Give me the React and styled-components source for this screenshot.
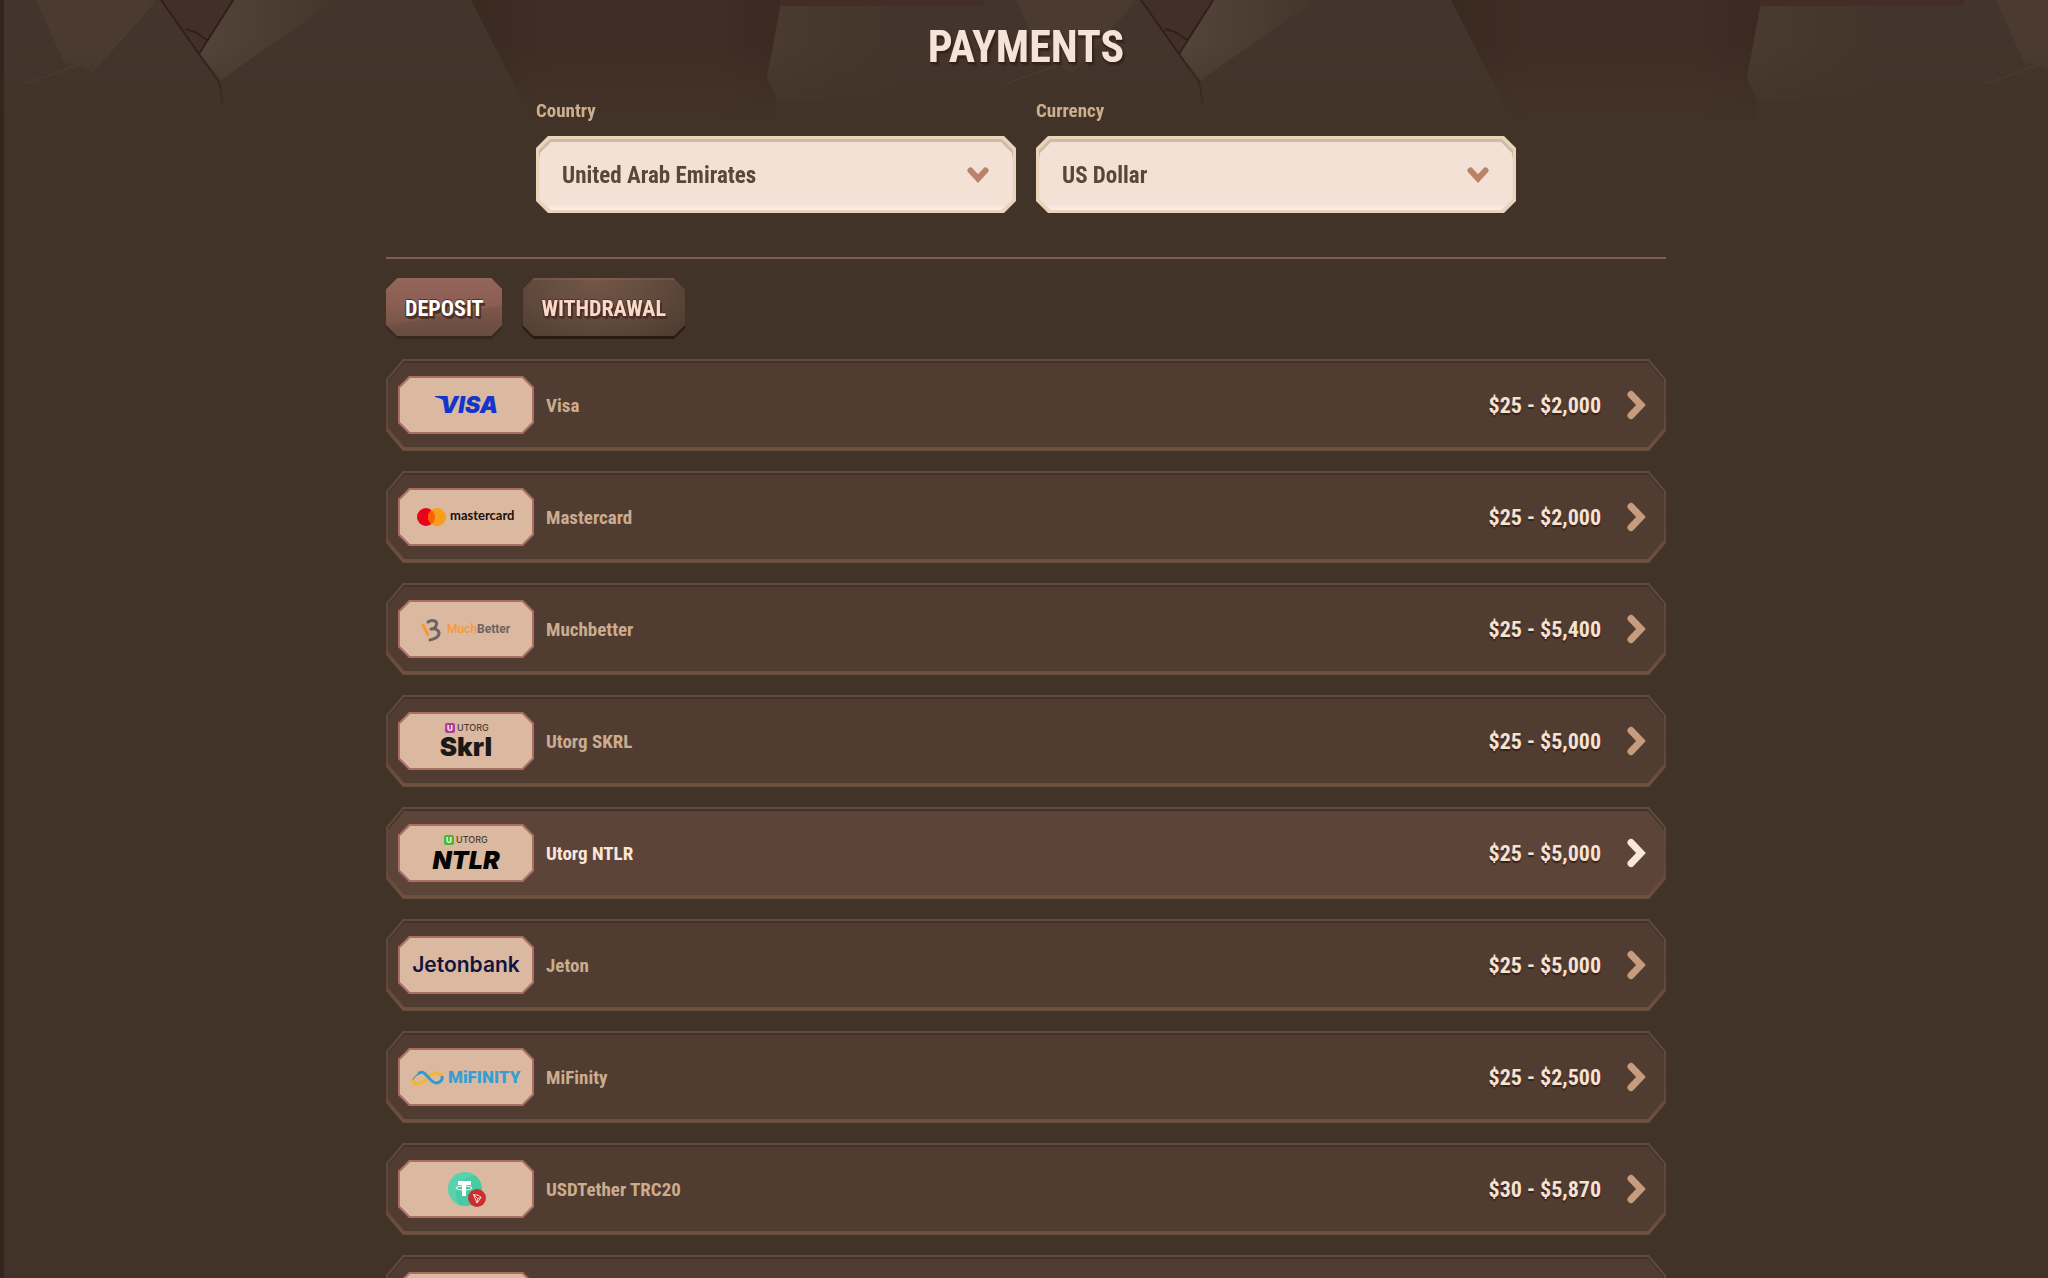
import React, { useState } from 'react';
import styled, { createGlobalStyle, css } from 'styled-components';

const GlobalStyle = createGlobalStyle`
  * {
    box-sizing: border-box;
  }

  body {
    margin: 0;
    background: #423328;
  }

  body, button, select {
    font-family: 'Roboto Condensed', Lato, sans-serif;
  }
`;

// cuts all four corners of a box
const chamfer = (x, y = x) => css`
  clip-path: polygon(
    ${x}px 0, calc(100% - ${x}px) 0, 100% ${y}px, 100% calc(100% - ${y}px),
    calc(100% - ${x}px) 100%, ${x}px 100%, 0 calc(100% - ${y}px), 0 ${y}px
  );
`;

const Page = styled.div`
  position: relative;
  height: 100vh;
  overflow: hidden auto;
  scrollbar-width: none;
  border-left: 4px solid #33261e;
`;

const Stones = styled.svg`
  position: absolute;
  top: 0;
  left: 0;
  z-index: -1;
  width: 100%;
  height: 150px;
`;

const Content = styled.main`
  width: 100%;
  max-width: 1280px;
  margin: 0 auto;
`;

const Title = styled.h1`
  margin: 0;
  padding: 22px 0 24px;
  font-size: 44px;
  line-height: 50px;
  text-align: center;
  color: #f6e3d8;
  text-shadow: 0 2px 0 #35221b, 2px 3px 2px #35221b;
`;

const Filters = styled.div`
  display: grid;
  grid-template-columns: 1fr 1fr;
  gap: 20px;
  padding: 0 150px 44px;
  border-bottom: 2px solid #85594f;
`;

const Field = styled.div`
  display: flex;
  flex-direction: column;
  gap: 10px;
`;

const Label = styled.label`
  font-size: 19px;
  line-height: 30px;
  font-weight: bold;
  color: #cfae8f;
`;

const SelectFrame = styled.div`
  padding: 3px;
  background: #ead5bb;
  ${chamfer(12)}
`;

const SelectShade = styled.div`
  padding: 3px 1px 0;
  background: linear-gradient(#cfbaa7, #cfbaa7 16px, #f1dcd0 20px);
  ${chamfer(11)}
`;

const SelectFace = styled.div`
  display: grid;
  align-items: center;
  padding-bottom: 2px;
  background: linear-gradient(#f4e1d6 62px, #fcede2);
  ${chamfer(11)}

  > * {
    grid-area: 1 / 1;
  }

  svg {
    justify-self: end;
    margin-right: 23px;
    pointer-events: none;
  }
`;

const Select = styled.select`
  appearance: none;
  width: 100%;
  height: 66px;
  padding: 0 60px 0 22px;
  border: 0;
  outline: 0;
  background: transparent;
  font-size: 23px;
  font-weight: bold;
  color: #5b463a;
`;

const Tabs = styled.div`
  display: flex;
  gap: 20px;
  padding: 19px 0 20px;
`;

const TabFrame = styled.div`
  padding-bottom: 3px;
  background: ${p => (p.$active ? '#38271e' : '#2b1c12')};
  ${chamfer(11)}
`;

const Tab = styled.button`
  display: block;
  height: 58px;
  padding: 2px 19px 0;
  border: 0;
  cursor: pointer;
  font-size: 22px;
  font-weight: bold;
  color: ${p => (p.$active ? '#ffffff' : '#fbd9c9')};
  text-shadow: 0 2px 0 #4c2f29, 2px 3px 0 #4c2f29, -1px 1px 0 #4c2f29, 0 -1px 0 #4c2f29;
  background: ${p => (p.$active
    ? 'linear-gradient(170deg, transparent 60%, rgba(80, 60, 48, 0.2) 62%), linear-gradient(#92645a, #8d5f54 40%, #6d5043)'
    : 'radial-gradient(ellipse at 45% 0, #745747, #5d483b 60%, #4d3b2f)')};
  box-shadow: inset 0 2px 0 rgba(140, 110, 95, 0.35);
  ${chamfer(11)}
`;

const Methods = styled.ul`
  display: flex;
  flex-direction: column;
  gap: 20px;
  margin: 0;
  padding: 0 0 20px;
  list-style: none;
`;

const RowFrame = styled.li`
  padding: 2px 2px 4px;
  background: linear-gradient(#5f4a3d, #5f463a 60%, #6e5041);
  ${chamfer(17, 20)}
`;

const RowShade = styled.div`
  padding-top: 2px;
  background: linear-gradient(#443127, #443127 20px, transparent 24px);
  ${chamfer(16, 19)}
`;

const Row = styled.button`
  display: flex;
  align-items: center;
  gap: 12px;
  width: 100%;
  height: 84px;
  padding: 0 18px 0 10px;
  border: 0;
  cursor: pointer;
  text-align: left;
  background: ${p => (p.$active ? '#5c4438' : '#513c31')};
  color: ${p => (p.$active ? '#fbe6da' : '#cbac8e')};
  ${chamfer(16, 19)}

  > svg {
    margin-left: 13px;
    color: ${p => (p.$active ? '#fbe6da' : '#c69c7d')};
  }
`;

const BadgeFrame = styled.span`
  padding: 2px;
  background: #a96f62;
  ${chamfer(11)}
`;

const Badge = styled.span`
  display: flex;
  flex-direction: column;
  align-items: center;
  justify-content: center;
  width: 132px;
  height: 54px;
  background: #dbb9a0;
  ${chamfer(10)}
`;

const Name = styled.span`
  flex: 1;
  font-size: 19px;
  font-weight: bold;
`;

const Limits = styled.span`
  font-size: 22px;
  font-weight: bold;
  color: #f8e1d1;
  text-shadow: 0 2px 1px #35221b;
`;

const Chevron = ({ down }) => (
  down ? (
    <svg width='22' height='16' viewBox='0 0 22 16' fill='none' stroke='#b98369' strokeWidth='6' aria-hidden='true'>
      <path d='M3.5 3.5l7.5 8 7.5-8' strokeLinecap='round' />
    </svg>
  ) : (
    <svg width='20' height='30' viewBox='0 0 20 30' fill='none' stroke='currentColor' strokeWidth='7' aria-hidden='true'>
      <path d='M5 4.500L15 15 5 25.500' strokeLinecap='round' />
    </svg>
  )
);

const LogoText = styled.text`
  font-family: ${p => p.$family || 'Inter'}, sans-serif;
  font-weight: ${p => p.$weight || 700};
  font-style: ${p => (p.$italic ? 'italic' : 'normal')};
  font-size: ${p => p.$size}px;
`;

const Logo = ({ title, children }) => (
  <svg width='130' height='54' viewBox='0 0 130 54' role='img' aria-label={title}>
    {children}
  </svg>
);

const VisaLogo = () => (
  <Logo title='Visa'>
    <path d='M34 18h10l2 7c-3-3-7-5-12-6z' fill='#1434cb' />
    <LogoText x='39' y='35' $weight={900} $italic $size={23} fill='#1434cb'>VISA</LogoText>
  </Logo>
);

const MastercardLogo = () => (
  <Logo title='Mastercard'>
    <circle cx='25' cy='27' r='9' fill='#eb001b' />
    <circle cx='36' cy='27' r='9' fill='#f79e1b' />
    <path d='M30.500 19.900a9 9 0 0 1 0 14.200 9 9 0 0 1 0-14.200z' fill='#ff5f00' />
    <LogoText x='49' y='30' $family='Lato' $size={13} fill='#17100c'>mastercard</LogoText>
  </Logo>
);

const MuchBetterLogo = () => (
  <Logo title='MuchBetter'>
    <g fill='none' strokeWidth='3' strokeLinecap='round' strokeLinejoin='round'>
      <path d='M22 23l5 10' stroke='#f6983a' />
      <path d='M27 20c4-3 11-1 8 4-1 2-3 3-5 3 6-1 10 3 7 7-2 3-5 3-8 4' stroke='#6a6564' />
    </g>
    <LogoText x='46' y='31' $family='Roboto' $weight={500} $size={12} fill='#f6983a'>
      Much<tspan fill='#6a6564' fontWeight='700'>Better</tspan>
    </LogoText>
  </Logo>
);

const UtorgLogo = ({ title, color, x, children }) => (
  <Logo title={title}>
    <rect x={x} y='9' width='10' height='10' rx='2' fill={color} />
    <LogoText x={x + 5} y='17' textAnchor='middle' $size={8} fill='#fff'>U</LogoText>
    <LogoText x={x + 12} y='17' $weight={500} $size={9} fill='#4a3b35'>UTORG</LogoText>
    {children}
  </Logo>
);

const SkrlLogo = () => (
  <UtorgLogo title='Utorg Skrl' color='#b23a9c' x={44}>
    <LogoText x='65' y='42' textAnchor='middle' $weight={900} $size={26} fill='#1b1818'>Skrl</LogoText>
  </UtorgLogo>
);

const NtlrLogo = () => (
  <UtorgLogo title='Utorg NTLR' color='#4fb52c' x={43}>
    <LogoText x='65' y='43' textAnchor='middle' $weight={900} $italic $size={25} fill='#060505'>NTLR</LogoText>
  </UtorgLogo>
);

const JetonLogo = () => (
  <Logo title='Jetonbank'>
    <LogoText x='65' y='34' textAnchor='middle' $weight={600} $size={21} fill='#121440'>Jetonbank</LogoText>
  </Logo>
);

const MiFinityLogo = () => (
  <Logo title='MiFinity'>
    <g fill='none' strokeLinecap='round'>
      <path d='M12 30c1-4 6-7 10-7' stroke='#3d6f86' strokeWidth='1' />
      <path d='M12 31c3 6 10 2 15-3' stroke='#f2b632' strokeWidth='3' />
      <path d='M27 27c5-5 11-6 14 0' stroke='#f2b632' strokeWidth='3' />
      <path d='M18 23c8-4 10 11 18 10 4-1 6-4 5-6' stroke='#2c9bd6' strokeWidth='3' />
    </g>
    <LogoText x='47' y='33' $family='Roboto' $weight={900} $size={17} fill='#379ed2'>MiFINITY</LogoText>
  </Logo>
);

const TetherLogo = () => (
  <Logo title='Tether TRC20'>
    <circle cx='64' cy='27' r='17' fill='#48cba4' />
    <path d='M47 27a17 17 0 0 1 28-13 19 19 0 0 0-17 29 17 17 0 0 1-11-16z' fill='#7addbf' opacity='0.35' />
    <g fill='#fff'>
      <rect x='57' y='19' width='13' height='4' />
      <rect x='61' y='19' width='4' height='15' />
    </g>
    <ellipse cx='63' cy='26' rx='8' ry='2' fill='none' stroke='#fff' strokeWidth='1' />
    <circle cx='76' cy='36' r='9' fill='#c9302c' />
    <path d='M72.500 32.500l5.500 1 2 2-4 5.500zM72.500 32.500l4 4 3.500-1M76.500 36.500l-.5 4.500' fill='none' stroke='#fff' strokeWidth='0.8' strokeLinejoin='round' />
  </Logo>
);

const methods = [
  { name: 'Visa', limits: '$25 - $2,000', logo: VisaLogo },
  { name: 'Mastercard', limits: '$25 - $2,000', logo: MastercardLogo },
  { name: 'Muchbetter', limits: '$25 - $5,400', logo: MuchBetterLogo },
  { name: 'Utorg SKRL', limits: '$25 - $5,000', logo: SkrlLogo },
  { name: 'Utorg NTLR', limits: '$25 - $5,000', logo: NtlrLogo },
  { name: 'Jeton', limits: '$25 - $5,000', logo: JetonLogo },
  { name: 'MiFinity', limits: '$25 - $2,500', logo: MiFinityLogo },
  { name: 'USDTether TRC20', limits: '$30 - $5,870', logo: TetherLogo },
];

const StoneWall = () => (
  <Stones aria-hidden='true'>
    <defs>
      <linearGradient id='fade' x1='0' y1='0' x2='0' y2='1'>
        <stop offset='0.3' stopColor='#423328' stopOpacity='0' />
        <stop offset='0.85' stopColor='#423328' />
      </linearGradient>
      <linearGradient id='gap' x1='0' x2='1'>
        <stop offset='0' stopColor='#392a20' />
        <stop offset='0.25' stopColor='#402d25' />
        <stop offset='0.8' stopColor='#402d25' />
        <stop offset='1' stopColor='#3a2a21' />
      </linearGradient>
      <linearGradient id='facet' x1='0' x2='1'>
        <stop offset='0' stopColor='#54443a' />
        <stop offset='1' stopColor='#44362b' />
      </linearGradient>
      <linearGradient id='slab' x1='0' x2='1'>
        <stop offset='0' stopColor='#4a3a2f' />
        <stop offset='0.6' stopColor='#43352b' />
      </linearGradient>
      <pattern id='stones' width='980' height='150' patternUnits='userSpaceOnUse'>
        <rect width='980' height='150' fill='#43352b' />
        <path d='M32 0h118L88 72l-14-6-14-4z' fill='#4a3a30' />
        <path d='M21 84l53-19M88 72l62-70' fill='none' stroke='#524238' />
        <path d='M157 0h71l-33 54z' fill='#422f28' />
        <path d='M231 0h100L217 80l-22-26z' fill='url(#facet)' />
        <path d='M157 0l38 54 20 28 4 22M181 29l10 3 12 8M229 0l-34 54' fill='none' stroke='#2e2019' strokeWidth='2' />
        <path d='M467 0h310l-14 78 10 24v48H537l-15-42z' fill='url(#gap)' />
        <path d='M777 5l-14 73 10 22h207V5z' fill='url(#slab)' />
        <path d='M777 0h203v6H777z' fill='#422e26' />
      </pattern>
    </defs>
    <rect width='100%' height='150' fill='url(#stones)' />
    <rect width='100%' height='150' fill='url(#fade)' />
  </Stones>
);

const Dropdown = ({ id, label, options }) => (
  <Field>
    <Label htmlFor={id}>{label}</Label>
    <SelectFrame>
      <SelectShade>
        <SelectFace>
          <Select id={id}>
            {options.map(o => <option key={o}>{o}</option>)}
          </Select>
          <Chevron down />
        </SelectFace>
      </SelectShade>
    </SelectFrame>
  </Field>
);

export default function App() {
  const [tab, setTab] = useState('DEPOSIT');
  const [selected, setSelected] = useState('Utorg NTLR');

  return (
    <>
      <GlobalStyle />
      <Page>
        <StoneWall />
        <Content>
          <Title>PAYMENTS</Title>
          <Filters>
            <Dropdown id='country' label='Country' options={['United Arab Emirates']} />
            <Dropdown id='currency' label='Currency' options={['US Dollar']} />
          </Filters>
          <Tabs>
            {['DEPOSIT', 'WITHDRAWAL'].map(t => (
              <TabFrame key={t} $active={t === tab}>
                <Tab type='button' $active={t === tab} onClick={() => setTab(t)}>{t}</Tab>
              </TabFrame>
            ))}
          </Tabs>
          <Methods>
            {methods.map(({ name, limits, logo: MethodLogo }) => (
              <RowFrame key={name}>
                <RowShade>
                  <Row type='button' $active={name === selected} onClick={() => setSelected(name)}>
                    <BadgeFrame><Badge><MethodLogo /></Badge></BadgeFrame>
                    <Name>{name}</Name>
                    <Limits>{limits}</Limits>
                    <Chevron />
                  </Row>
                </RowShade>
              </RowFrame>
            ))}
            <RowFrame>
              <RowShade>
                <Row type='button' aria-label='Loading' disabled>
                  <BadgeFrame><Badge /></BadgeFrame>
                </Row>
              </RowShade>
            </RowFrame>
          </Methods>
        </Content>
      </Page>
    </>
  );
}
